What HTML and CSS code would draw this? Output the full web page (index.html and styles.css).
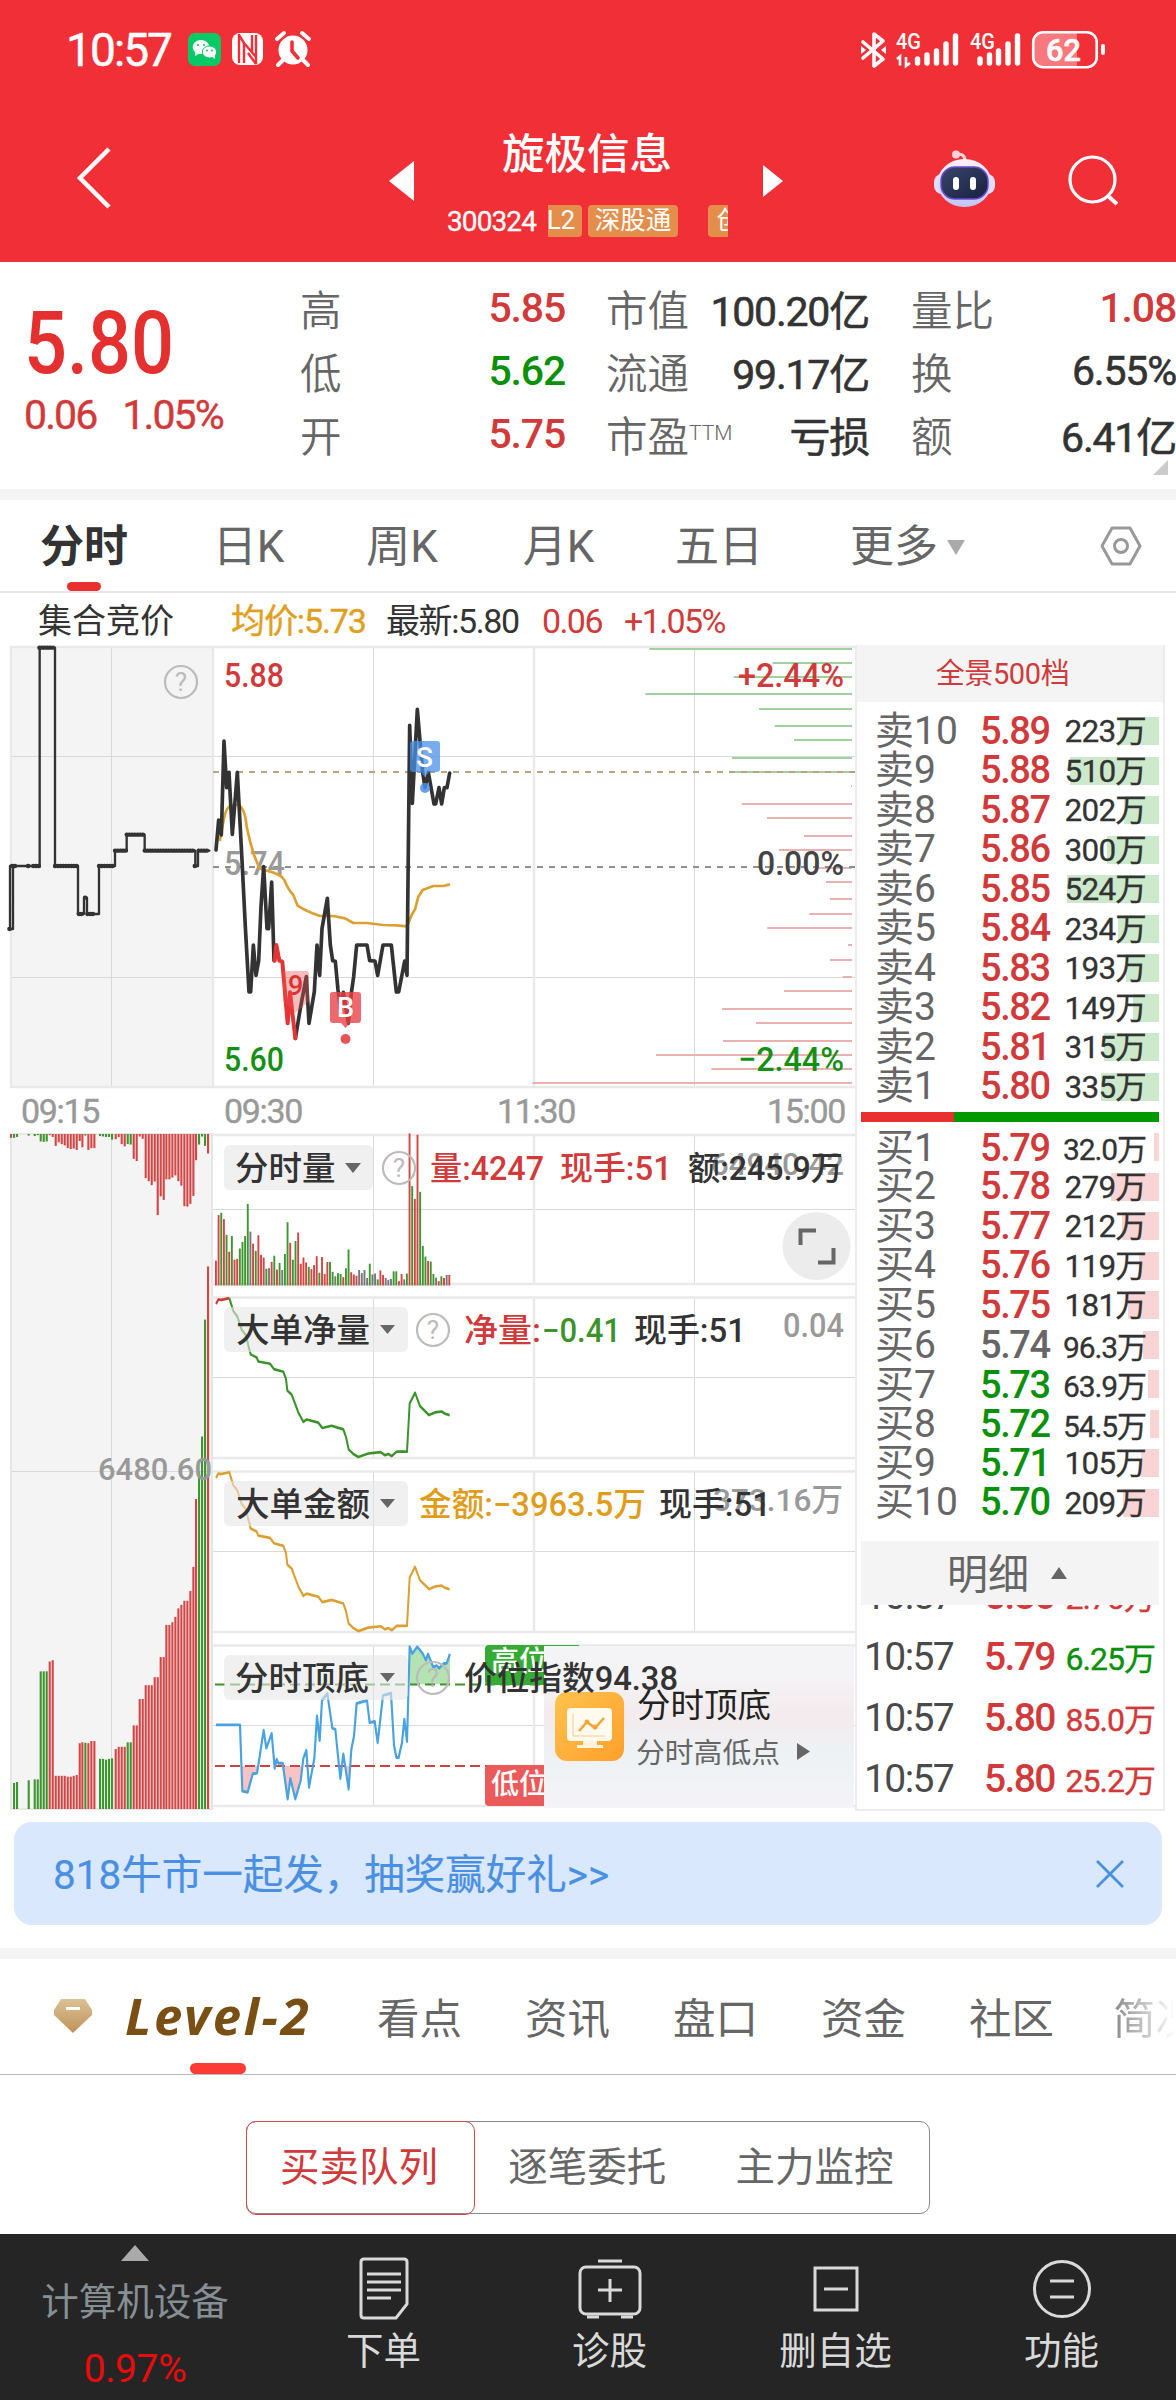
FILE: index.html
```html
<!DOCTYPE html>
<html lang="zh-CN">
<head>
<meta charset="utf-8">
<title>旋极信息 300324</title>
<link rel="stylesheet" href="styles.css">
</head>
<body>
<header class="header">
  <div class="status">
    <span class="clock">10:57</span>
    <svg class="st-left" width="128" height="36" viewBox="0 0 128 36">
      <rect x="0" y="1" width="33" height="33" rx="7" fill="#07c966"/>
      <ellipse cx="13" cy="15" rx="8.3" ry="7" fill="#fff"/><path d="M7 19l0 5 5-3z" fill="#fff"/>
      <ellipse cx="21.5" cy="20" rx="7.2" ry="6" fill="#fff" stroke="#07c966"/><path d="M23 24l4 3 0-5z" fill="#fff"/>
      <g fill="#07c966"><circle cx="10" cy="13" r="1.1"/><circle cx="16" cy="13" r="1.1"/><circle cx="19" cy="18.5" r="1"/><circle cx="24" cy="18.5" r="1"/></g>
      <rect x="44" y="1" width="31" height="32" rx="8" fill="#fff"/>
      <path d="M51 2v29M56 31V11l12 14M68 32V3M64 20V3M56 11L51 3M68 32l-8-11" fill="none" stroke="#f02f37" stroke-width="2.4"/>
      <circle cx="105" cy="18" r="14.5" fill="#fff"/>
      <path d="M89 7l7-6M114 1l7 6M95 28l-5 5M115 28l5 5" stroke="#fff" stroke-width="4" stroke-linecap="round"/>
      <path d="M104 10v9l6 7" fill="none" stroke="#f02f37" stroke-width="3.6" stroke-linecap="round"/>
    </svg>
    <svg class="st-right" width="250" height="38" viewBox="860 31 250 38">
      <path d="M863 42l20 17-9 7V34l9 7-20 17" fill="none" stroke="#fff" stroke-width="3.6" stroke-linejoin="round" stroke-linecap="round"/>
      <path d="M861 46l5 4-5 4zM886 46l-5 4 5 4z" fill="#fff"/>
      <g fill="#fff" font-family="Roboto" font-weight="500" font-size="22.500">
        <text x="896" y="49" textLength="25" lengthAdjust="spacingAndGlyphs">4G</text>
        <text x="970" y="49" textLength="25" lengthAdjust="spacingAndGlyphs">4G</text>
      </g>
      <path d="M897 59l3-2.500v9M906 57v9l4-3" fill="none" stroke="#fff" stroke-width="2.600"/>
      <g stroke="#fff" stroke-width="5.400" stroke-linecap="round">
        <path d="M917.500 59v4M927 55v8M936.500 51v12M946 44v19M955.500 36v27"/>
        <path d="M980 59v4M989.500 55v8M998.500 51v12M1008 44v19M1017.500 36v27"/>
      </g>
      <path d="M1042 33h35v34h-35a9 9 0 0 1-9-9V42a9 9 0 0 1 9-9z" fill="#f7797d"/>
      <rect x="1033.200" y="32.200" width="63.500" height="35" rx="10" fill="none" stroke="#fff" stroke-width="2.600"/>
      <rect x="1101" y="44" width="4" height="11" rx="2" fill="#fff"/>
      <text x="1046" y="61" font-family="Roboto" font-weight="500" font-size="32" fill="#fff" stroke="#fff" stroke-width=".6" textLength="35" lengthAdjust="spacingAndGlyphs">62</text>
    </svg>
  </div>
  <div class="titlebar">
    <svg class="back" width="40" height="66" viewBox="0 0 40 66"><path d="M35 4L6 33l29 29" fill="none" stroke="#fff" stroke-width="4.500"/></svg>
    <div class="title-nav">
      <svg width="25" height="40"><path d="M25 0v40L0 20z" fill="#fff"/></svg>
      <div class="title-mid">
        <h1>旋极信息</h1>
        <div class="codes">
          <span class="code">300324</span>
          <div class="badges"><span class="badge l2">L2</span><span class="badge sg">深股通</span><span class="badge cy">创业板</span></div>
        </div>
      </div>
      <svg class="tri-next" width="20" height="32"><path d="M0 0v32l20-16z" fill="#fff"/></svg>
    </div>
    <svg class="robot" width="62" height="58" viewBox="0 0 62 58">
      <defs>
        <linearGradient id="shell" x1="0" y1="0" x2="0" y2="1"><stop offset="0" stop-color="#fff0f6"/><stop offset="1" stop-color="#bfc6f6"/></linearGradient>
        <linearGradient id="face" x1="0" y1="0" x2="1" y2="1"><stop offset="0" stop-color="#38456b"/><stop offset="1" stop-color="#18203f"/></linearGradient>
      </defs>
      <path d="M22 4q9-1 9 7" fill="none" stroke="#ffd9e0" stroke-width="3"/><circle cx="22" cy="4.500" r="4" fill="#ffd3da"/>
      <rect x="0" y="24" width="61" height="20" rx="8" fill="#dfe0fb"/>
      <ellipse cx="30.500" cy="33" rx="27" ry="24" fill="url(#shell)"/>
      <rect x="7" y="17" width="47" height="32" rx="14" fill="url(#face)" stroke="#6a4cd0" stroke-width="1.500"/>
      <rect x="19" y="27" width="6" height="13" rx="3" fill="#fff"/><rect x="36" y="27" width="6" height="13" rx="3" fill="#fff"/>
    </svg>
    <svg class="search" width="54" height="54" viewBox="0 0 54 54"><circle cx="25.500" cy="25.500" r="22.500" fill="none" stroke="#fff" stroke-width="3.200"/><path d="M41 42l9 8" stroke="#fff" stroke-width="4"/></svg>
  </div>
</header>

<section class="quote">
  <div class="price-block">
    <div class="last">5.80</div>
    <div class="chg"><span>0.06</span><span>1.05%</span></div>
  </div>
  <dl class="col c1"><dt>高</dt><dd class="up">5.85</dd><dt>低</dt><dd class="down">5.62</dd><dt>开</dt><dd class="up">5.75</dd></dl>
  <dl class="col c2"><dt>市值</dt><dd>100.20亿</dd><dt>流通</dt><dd>99.17亿</dd><dt>市盈<sup>TTM</sup></dt><dd>亏损</dd></dl>
  <dl class="col c3"><dt>量比</dt><dd class="up">1.08</dd><dt>换</dt><dd>6.55%</dd><dt>额</dt><dd>6.41亿</dd></dl>
  <i class="corner"></i>
</section>
<div class="gapbar"></div>

<nav class="ktabs">
  <b class="on">分时</b><span>日K</span><span>周K</span><span>月K</span><span>五日</span><span class="more">更多<i></i></span>
  <svg width="42" height="40" viewBox="0 0 42 40"><path d="M12 2h18l10 18-10 18H12L2 20z" fill="none" stroke="#999" stroke-width="3" stroke-linejoin="round"/><circle cx="21" cy="20" r="6.500" fill="none" stroke="#999" stroke-width="3"/></svg>
</nav>
<div class="info"><span class="i1">集合竞价</span><span class="i2">均价:5.73</span><span class="i3">最新:5.80</span><span class="i4">0.06</span><span class="i5">+1.05%</span></div>

<main class="market">
  <div class="charts">
    <svg class="plot" width="855" height="444" viewBox="0 645 855 444">
      <rect x="10" y="646" width="203" height="441" fill="#f4f4f4"/>
      <path d="M111.500 646v441M373.500 646v441M694.500 646v441M10 756.500h845M10 977.500h845" stroke="#d9d9d9"/>
      <path d="M10 647h845M10 1087h845M11 646v442M213 646v442M534 646v442" stroke="#e9e9e9" stroke-width="2.500"/>
      <g id="depth"></g>
      <path d="M213 772h642" stroke="#b7a482" stroke-width="2" stroke-dasharray="6 6"/>
      <path d="M213 867h642" stroke="#8f8f8f" stroke-width="2" stroke-dasharray="6 6"/>
      <g class="lbl" font-size="34">
        <text x="224" y="687" fill="#d03a3a" textLength="60" lengthAdjust="spacingAndGlyphs">5.88</text>
        <text x="224" y="875" fill="#999" textLength="61" lengthAdjust="spacingAndGlyphs">5.74</text>
        <text x="224" y="1071" fill="#159015" textLength="60" lengthAdjust="spacingAndGlyphs">5.60</text>
        <text x="738" y="687" fill="#d03a3a" textLength="106" lengthAdjust="spacingAndGlyphs">+2.44%</text>
        <text x="757" y="875" fill="#444" textLength="87" lengthAdjust="spacingAndGlyphs">0.00%</text>
        <text x="738" y="1071" fill="#159015" textLength="106" lengthAdjust="spacingAndGlyphs">−2.44%</text>
      </g>
      <g transform="translate(0 640) scale(.33333)" fill="none" stroke-linejoin="round" stroke-linecap="round">
        <path stroke="#333" stroke-width="7" d="M30 867V678M30 867h9V678H119V23H165V678H234V822H252V773H261V822H297V678H345V632H380V584H434V632H586V678H594V632H628"/>
        <path stroke="#333" stroke-width="13" stroke-dasharray="1 7" d="M28 867h4M36 678h14M84 678h2M100 678h18M118 23h44M165 678h70M236 822h12M255 773h3M262 822h18M297 678h44M345 632h34M380 584h52M434 632h148M584 678h4M596 632h32"/>
        <path stroke="#dba033" stroke-width="8" d="M660 600L672 535Q680 497 697 495L715 495Q735 505 740 560Q748 600 762 645L778 685L800 692Q845 703 853 720Q865 750 880 765L893 797Q920 815 960 828L1000 828L1035 835L1060 849L1100 849L1150 855L1190 856L1221 859L1235 825L1245 808L1255 770L1268 750L1300 738L1330 738L1347 734"/>
        <path stroke="#333" stroke-width="11" d="M648 630L656 540 664 585 672 303 680 443 687 397 697 583 712 397 727 680 736 860 747 1056H752L760 915 768 1006 776 963 783 800 791 680 801 866H806L815 726 822 962M886 1195L902 1100 919 1010 927 1150 943 1055 951 915 959 1006 966 866 982 775 991 915 998 962 1006 964 1014 1050 1022 1110 1030 1057 1045 1150 1054 1060 1061 1010 1070 915H1101L1109 962 1125 963 1133 1006 1149 915H1174L1189 1056H1196L1214 963 1221 1006 1229 256 1237 490 1252 208 1260 303 1268 397 1275 443 1285 397 1302 492H1307L1317 443 1325 492 1333 443H1341L1349 399"/>
        <path stroke="#e53434" stroke-width="12" d="M824 962L829 915 838 962 847 965 863 1150 870 1057 886 1195"/>
      </g>
      <path d="M283 971h23q3 0 3 3v27l-13.500 12-12.500-12z" fill="#ea5050" fill-opacity=".38"/>
      <text class="lbl" x="288" y="995" font-size="27" fill="#d93333">9</text>
      <path d="M333 992h25q3 0 3 3v25q0 3-3 3h-8l-4.500 5-4.500-5h-8q-3 0-3-3v-25q0-3 3-3z" fill="#e83f44" fill-opacity=".78"/>
      <circle cx="345.500" cy="1039" r="5" fill="#e65458"/>
      <text class="lbl" x="337" y="1017" font-size="27" fill="#fff">B</text>
      <path d="M413 741h24q3 0 3 3v25q0 3-3 3h-8l-4 5-4-5h-8q-3 0-3-3v-25q0-3 3-3z" fill="#4a90ea" fill-opacity=".75"/>
      <circle cx="425" cy="788" r="5" fill="#4a90ea" fill-opacity=".85"/>
      <text class="lbl" x="416" y="767" font-size="28" fill="#fff">S</text>
      <g class="ask"><circle cx="181" cy="682" r="16"/><text x="181" y="691">?</text></g>
    </svg>
    <div class="axis"><span>09:15</span><span>09:30</span><span>11:30</span><span>15:00</span></div>
    <div class="lower">
      <svg class="plot" width="213" height="678" viewBox="0 1133 213 678">
        <rect x="10" y="1134" width="203" height="675" fill="#f4f4f4"/>
        <path d="M111.500 1134v675M10 1471.500h203" stroke="#d9d9d9"/>
        <path d="M11 1134v675M10 1134h203M10 1809h203M212 1134v675" stroke="#e6e6e6" stroke-width="2"/>
        <g id="auction"></g>
        <text class="lbl" x="98" y="1480" font-size="32" fill="#999" textLength="114" lengthAdjust="spacingAndGlyphs">6480.60</text>
      </svg>
      <div class="stack">
        <svg class="plot" width="642" height="153" viewBox="213 1133 642 153">
          <path d="M373.500 1134v151M694.500 1134v151M213 1209.500h642" stroke="#d9d9d9"/>
          <path d="M213 1135h642M213 1284h642M534 1134v151" stroke="#e9e9e9" stroke-width="2.500"/>
          <g id="volume"></g>
          <rect class="pill" x="224" y="1145" width="149" height="45" rx="6"/>
          <text class="lbl" x="235" y="1180" font-size="33.500" fill="#333">分时量</text>
          <path d="M345 1163h16l-8 10z" fill="#666"/>
          <g class="ask"><circle cx="399" cy="1168" r="16"/><text x="399" y="1177">?</text></g>
          <text class="lbl" x="711" y="1175" font-size="32" fill="#999" textLength="133" lengthAdjust="spacingAndGlyphs">64940.42</text>
          <g class="lbl" font-size="32.500">
            <text x="430" y="1180" fill="#d03a3a" textLength="114" lengthAdjust="spacingAndGlyphs">量:4247</text>
            <text x="560" y="1180" fill="#d03a3a" textLength="112" lengthAdjust="spacingAndGlyphs">现手:51</text>
            <text x="688" y="1180" fill="#333" textLength="155" lengthAdjust="spacingAndGlyphs">额:245.9万</text>
          </g>
          <circle cx="816.500" cy="1246" r="34" fill="#ececec"/>
          <path d="M800.500 1245v-14.500H816M818 1262.500h15.500V1248" fill="none" stroke="#666" stroke-width="4"/>
        </svg>
        <svg class="plot" width="642" height="163" viewBox="213 1296 642 163">
          <path d="M373.500 1297v161M694.500 1297v161M213 1377.500h642" stroke="#d9d9d9"/>
          <path d="M213 1297.500h642M213 1458h642M534 1297v161" stroke="#e9e9e9" stroke-width="2.500"/>
          <g transform="translate(0 1120) scale(.33333 .44643)" fill="none" stroke-width="6" stroke-linejoin="round">
            <path stroke="#d03a3a" d="M648 412L655 402 665 403 688 399"/>
            <path stroke="#3c932c" d="M688 399L700 428 712 440 725 470 738 482 745 505 752 525 770 532 775 541 810 546 822 558 850 564 858 580 862 606 875 615 895 655 910 676 920 671 955 678 967 690 995 685 1030 693 1038 710 1046 738 1060 748 1075 755 1105 747 1142 744 1155 751 1165 748 1175 753 1190 743 1221 743 1229 635 1245 611 1260 641 1275 652 1287 661 1305 655 1325 653 1335 658 1349 661"/>
          </g>
          <rect class="pill" x="224" y="1307" width="184" height="45" rx="6"/>
          <text class="lbl" x="236" y="1342" font-size="33.500" fill="#333">大单净量</text>
          <path d="M380 1325h15l-7.500 9z" fill="#666"/>
          <g class="ask"><circle cx="433" cy="1330" r="16"/><text x="433" y="1339">?</text></g>
          <g class="lbl" font-size="32.500">
            <text x="464" y="1342" fill="#d03a3a" textLength="77" lengthAdjust="spacingAndGlyphs">净量:</text>
            <text x="542" y="1342" fill="#3c932c" textLength="79" lengthAdjust="spacingAndGlyphs">−0.41</text>
            <text x="634" y="1342" fill="#333" textLength="112" lengthAdjust="spacingAndGlyphs">现手:51</text>
            <text x="783" y="1337" fill="#999" textLength="61" lengthAdjust="spacingAndGlyphs">0.04</text>
          </g>
        </svg>
        <svg class="plot" width="642" height="163" viewBox="213 1470 642 163">
          <path d="M373.500 1471v161M694.500 1471v161M213 1551.500h642" stroke="#d9d9d9"/>
          <path d="M213 1471.500h642M213 1632h642M534 1471v161" stroke="#e9e9e9" stroke-width="2.500"/>
          <path transform="translate(0 1294.100) scale(.33333 .44643)" fill="none" stroke="#dba033" stroke-width="6" stroke-linejoin="round" d="M648 412L655 402 665 403 688 399 700 428 712 440 725 470 738 482 745 505 752 525 770 532 775 541 810 546 822 558 850 564 858 580 862 606 875 615 895 655 910 676 920 671 955 678 967 690 995 685 1030 693 1038 710 1046 738 1060 748 1075 755 1105 747 1142 744 1155 751 1165 748 1175 753 1190 743 1221 743 1229 635 1245 611 1260 641 1275 652 1287 661 1305 655 1325 653 1335 658 1349 661"/>
          <rect class="pill" x="224" y="1481" width="184" height="45" rx="6"/>
          <text class="lbl" x="236" y="1516" font-size="33.500" fill="#333">大单金额</text>
          <path d="M380 1499h15l-7.500 9z" fill="#666"/>
          <text class="lbl" x="713" y="1511" font-size="32" fill="#999" textLength="130" lengthAdjust="spacingAndGlyphs">373.16万</text>
          <g class="lbl" font-size="32.500">
            <text x="419" y="1516" fill="#e09d1b" textLength="227" lengthAdjust="spacingAndGlyphs">金额:−3963.5万</text>
            <text x="659" y="1516" fill="#333" textLength="112" lengthAdjust="spacingAndGlyphs">现手:51</text>
          </g>
        </svg>
        <svg class="plot" width="642" height="165" viewBox="213 1644 642 165">
          <defs>
            <linearGradient id="card" x1="0" y1="0" x2="0" y2="1"><stop offset="0" stop-color="#f4f4f6"/><stop offset=".2" stop-color="#f4f3f5"/><stop offset=".42" stop-color="#f3ebed"/><stop offset=".68" stop-color="#edf2f4"/><stop offset="1" stop-color="#f4f3f7"/></linearGradient>
            <linearGradient id="ico" x1="0" y1="0" x2="1" y2="1"><stop offset="0" stop-color="#ffc34d"/><stop offset="1" stop-color="#ff9f2c"/></linearGradient>
          </defs>
          <path d="M373.500 1645v161M213 1725.500h642" stroke="#d9d9d9"/>
          <path d="M213 1645.500h642M213 1806h642M534 1645v161" stroke="#e9e9e9" stroke-width="2.500"/>
          <g transform="translate(0 1120) scale(.33333 .44643)">
            <path fill="#f7c3c5" d="M725 1447L727 1503 743 1506 758 1465 771 1463 775 1447zM849 1447L863 1521 871 1475 886 1521 902 1480 905 1447zM1016 1447L1021 1475 1027 1447zM1034 1447L1046 1499 1052 1447z"/>
            <path fill="#b4e2b3" d="M1229 1264V1180L1237 1195 1252 1180 1268 1195 1278 1210 1284 1196 1300 1226 1318 1228 1330 1218 1340 1217 1350 1196V1264z"/>
          </g>
          <path d="M215 1684.500h340" stroke="#3c932c" stroke-width="2" stroke-dasharray="10 5"/>
          <path d="M215 1766h340" stroke="#d04040" stroke-width="2" stroke-dasharray="10 5"/>
          <path transform="translate(0 1120) scale(.33333 .44643)" fill="none" stroke="#4aa3df" stroke-width="6.500" stroke-linejoin="round" d="M648 1355H720L727 1503 743 1506 758 1465 771 1463 776 1440 791 1367 799 1407 815 1374 824 1452 830 1432 835 1441 848 1441 863 1521 871 1475 886 1521 902 1480 910 1430 919 1412 927 1495 943 1430 951 1335 959 1390 966 1300 982 1285 997 1362 1006 1365 1014 1425 1021 1475 1030 1420 1046 1499 1054 1410 1062 1380 1070 1307 1101 1300 1109 1350 1124 1347 1133 1395 1149 1289 1173 1284 1182 1400 1189 1428 1196 1428 1206 1395 1213 1342 1221 1392 1229 1180 1237 1195 1252 1180 1268 1195 1278 1210 1284 1196 1300 1226 1310 1222 1318 1228 1330 1218 1340 1217 1350 1196"/>
          <rect class="pill" x="224" y="1655" width="184" height="45" rx="6"/>
          <text class="lbl" x="235" y="1690" font-size="33.500" fill="#333">分时顶底</text>
          <path d="M380 1673h15l-7.500 9z" fill="#666"/>
          <g class="ask"><circle cx="433" cy="1678" r="16"/><text x="433" y="1687">?</text></g>
          <rect x="485" y="1645" width="96" height="40" rx="4" fill="#35ab35"/>
          <rect x="485" y="1765" width="96" height="41" rx="4" fill="#eb5a5a"/>
          <text class="lbl" x="491" y="1671" font-size="28" fill="#fff">高位</text>
          <text class="lbl" x="491" y="1794" font-size="28" fill="#fff">低位</text>
          <rect x="544" y="1646" width="310" height="162" fill="url(#card)"/>
          <rect x="555" y="1692" width="69" height="69" rx="12" fill="url(#ico)"/>
          <rect x="567" y="1708" width="45" height="33" rx="4" fill="#fff9ee"/><path d="M583 1741h14v4h6v3h-26v-3h6z" fill="#fff3dc"/>
          <path d="M573 1714v22h32" fill="none" stroke="#f8ddb0" stroke-width="1.500"/>
          <path d="M579 1731l8-9 8 6 9-10" fill="none" stroke="#f3a53a" stroke-width="2.600"/><circle cx="587" cy="1722" r="2.500" fill="#f3a53a"/><circle cx="595" cy="1727" r="2.500" fill="#f3a53a"/>
          <text class="lbl" x="464" y="1690" font-size="33" fill="#333" textLength="214" lengthAdjust="spacingAndGlyphs">价位指数94.38</text>
          <text class="lbl reg" x="637" y="1717" font-size="33.500" fill="#222">分时顶底</text>
          <text class="lbl reg" x="636" y="1763" font-size="28.800" fill="#666">分时高低点</text>
          <path d="M797 1743v17l13-8.500z" fill="#666"/>
        </svg>
      </div>
    </div>
  </div>
  <aside class="book">
    <div class="book-head">全景500档</div>
    <div class="side" id="sell"></div>
    <div class="ratio"><i></i></div>
    <div class="side" id="buy"></div>
    <div class="detail"><span>明细</span><i></i></div>
    <div class="trades" id="trades"></div>
  </aside>
</main>

<div class="banner"><span>818牛市一起发，抽奖赢好礼&gt;&gt;</span><svg width="30" height="30" viewBox="0 0 30 30"><path d="M2 2l26 26M28 2L2 28" stroke="#4a90e2" stroke-width="2.800"/></svg></div>
<div class="gapbar"></div>
<nav class="ltabs">
  <svg width="40" height="36" viewBox="0 0 40 36"><defs><linearGradient id="gem" x1="0" y1="0" x2="0" y2="1"><stop offset="0" stop-color="#dcc196"/><stop offset="1" stop-color="#bf915a"/></linearGradient></defs><path d="M8 0h24l7 11v5L20 34 1 16v-5z" fill="url(#gem)"/><path d="M13 9.500h14" stroke="#fff" stroke-width="3"/></svg>
  <b>Level-2</b><span>看点</span><span>资讯</span><span>盘口</span><span>资金</span><span>社区</span><span class="fade">简况</span>
</nav>
<section class="seg-wrap"><div class="seg"><span class="on">买卖队列</span><span>逐笔委托</span><span>主力监控</span></div></section>

<footer class="bottom">
  <div class="idx"><i></i><span>计算机设备</span><em>0.97%</em></div>
  <div class="act"><svg width="64" height="64" viewBox="0 0 64 64"><path d="M12 3h40q3 0 3 3v42L44 62H12q-3 0-3-3V6q0-3 3-3z"/><path d="M15 18h34M15 26h34M15 34h34M15 42h24"/></svg><span>下单</span></div>
  <div class="act"><svg width="68" height="64" viewBox="0 0 68 64"><rect x="4" y="11" width="60" height="47" rx="6"/><path d="M22 5h24M34 23v23M22 34h24M11 61h12M45 61h12"/></svg><span>诊股</span></div>
  <div class="act"><svg width="64" height="64" viewBox="0 0 64 64"><path d="M11 12h42v42H11zM20 33h24"/></svg><span>删自选</span></div>
  <div class="act"><svg width="64" height="64" viewBox="0 0 64 64"><circle cx="32" cy="33" r="27.500"/><path d="M20 25h24M20 41h24"/></svg><span>功能</span></div>
</footer>
<script src="script.js"></script>
</body>
</html>
```
FILE: styles.css
```css
* { box-sizing: border-box; margin: 0; padding: 0; }
body { width: 1176px; height: 2400px; overflow: hidden; background: #fff; color: #333; font-family: Roboto, "Noto Sans CJK SC", sans-serif; }
svg { display: block; flex: none; overflow: visible; }
i, em { font-style: normal; }
.up { color: #d03a3a; }
.down { color: #0a900a; }
.flat { color: #666; }

.header { height: 262px; background: #f02f37; color: #fff; }
.status { height: 100px; display: flex; align-items: center; padding: 0 66px 0 66px; }
.clock { width: 122px; font-size: 46px; font-weight: 400; letter-spacing: -1.9px; line-height: 100px; -webkit-text-stroke: .5px #fff; }
.st-right { margin-left: auto; }
.titlebar { height: 162px; display: flex; padding-left: 74px; }
.back { margin-top: 45px; }
.title-nav { margin-left: 275px; width: 394px; display: flex; }
.title-nav > svg { margin-top: 61px; }
.title-nav > .tri-next { margin-top: 65px; }
.title-mid { width: 349px; padding: 29px 0 0 34px; }
.title-mid h1 { width: 278px; text-align: center; font-size: 42.500px; font-weight: 500; line-height: 52px; }
.codes { display: flex; align-items: center; margin-top: 24px; height: 32px; }
.code { width: 101px; margin-left: -1px; font-size: 28px; letter-spacing: -.9px; -webkit-text-stroke: .3px; }
.badges { width: 180px; height: 32px; overflow: hidden; display: flex; }
.badge { flex: none; height: 32px; line-height: 31px; border-radius: 4px; background: #e58e4c; font-size: 25.500px; text-align: center; }
.l2 { width: 42px; margin-left: -8px; }
.sg { width: 90px; margin-left: 6px; }
.cy { width: 94px; margin-left: 30px; }
.robot { margin: 50px 0 0 151px; }
.search { margin: 54px 0 0 71px; }

.quote { height: 227px; display: flex; position: relative; padding-top: 14px; }
.price-block { width: 300px; padding-left: 24px; color: #e53030; }
.last { margin-top: 25px; font-size: 87px; line-height: 84px; font-weight: 500; transform: scaleX(.87); transform-origin: 0 0; }
.chg { display: flex; gap: 26px; margin-top: 2px; font-size: 41px; line-height: 56px; letter-spacing: -1.900px; color: #d03a3a; -webkit-text-stroke: .4px; }
.col { display: grid; grid-template-columns: 60px 1fr; grid-auto-rows: 63px; align-items: center; font-size: 41px; white-space: nowrap; }
.col dt { color: #666; font-size: 41.500px; font-weight: 350; }
.col dd { text-align: right; letter-spacing: -1.200px; font-weight: 500; }
.col dd:not(.up):not(.down) { font-weight: 400; -webkit-text-stroke: .6px #333; }
.c1 { width: 265px; }
.c2 { width: 263px; margin-left: 41px; }
.c3 { width: 265px; margin-left: 42px; }
.col sup { font-size: 21px; font-weight: 300; vertical-align: 12px; line-height: 0; }
.corner { position: absolute; right: 8px; bottom: 14px; border-left: 15px solid transparent; border-bottom: 15px solid #ccc; }
.gapbar { height: 11px; background: #f4f4f4; }

.ktabs { height: 93px; display: grid; grid-template-columns: 168px 161px 146px 167px 154px 223px 123px; align-items: center; justify-items: center; border-bottom: 2px solid #e8e8e8; font-size: 44px; color: #666; }
.ktabs > * { line-height: 87px; padding-top: 4px; }
.ktabs svg { justify-self: end; padding: 0; }
.ktabs .on { color: #333; position: relative; }
.ktabs .on::after { content: ""; position: absolute; left: 27px; bottom: 0; width: 34px; height: 9px; border-radius: 5px; background: #e93030; }
.more { display: flex; align-items: center; gap: 9px; }
.more i { border: 9px solid transparent; border-top: 15px solid #aaa; border-bottom: 0; }
.info { height: 52px; display: flex; padding-left: 38px; font-size: 34px; line-height: 56px; white-space: nowrap; }
.info span { letter-spacing: -.8px; }
.info .i1 { width: 193px; letter-spacing: 0; }
.info .i2 { width: 155px; color: #dfa022; -webkit-text-stroke: .4px; letter-spacing: -1.100px; }
.info .i3 { width: 156px; letter-spacing: -1.400px; }
.info .i4 { width: 82px; color: #d03a3a; letter-spacing: -1.600px; }
.info .i5 { color: #d03a3a; letter-spacing: -1.600px; }

.market { height: 1177px; display: flex; }
.charts { width: 855px; }
.lbl { font-family: Roboto, "Noto Sans CJK SC", sans-serif; font-weight: 500; }
.reg { font-weight: 400; }
.pill { fill: #e6e6e6; fill-opacity: .6; }
.ask circle { fill: none; stroke: #bbb; stroke-width: 2.200px; }
.ask text { fill: #bbb; font-size: 26px; text-anchor: middle; }
.axis { height: 44px; display: grid; grid-template-columns: 203px 273px 270px 98px; padding-left: 21px; font-size: 34px; line-height: 44px; color: #999; -webkit-text-stroke: .4px; }
.axis span { letter-spacing: -1.300px; }
.lower { display: flex; }
.stack { display: flex; flex-direction: column; gap: 10px; }
.stack svg:nth-child(n+3) { margin-top: 1px; }

.book { width: 310px; height: 1166px; border: 2px solid #ececec; border-top: 0; }
.book-head { height: 57px; background: #f4f4f4; color: #d03a3a; text-align: center; font-size: 29px; line-height: 58px; padding-right: 15px; letter-spacing: -.4px; }
.side { padding: 0 4px 0 18px; }
#sell { padding-top: 9px; }
.lv { height: 39.500px; display: grid; grid-template-columns: 105px 78px 104px; position: relative; align-items: center; line-height: 39px; white-space: nowrap; }
.lv > * { position: relative; }
.lv .bar { position: absolute; right: 0; top: 6px; height: 28px; background: #cce9cc; }
#buy .bar { background: #f9d4d4; }
.lv .n { font-size: 39px; color: #666; }
.lv .p { font-size: 38px; font-weight: 500; letter-spacing: -1.400px; }
.lv .v { font-size: 31.500px; width: 88px; text-align: right; letter-spacing: -.8px; padding-top: 1px; -webkit-text-stroke: .3px; }
.lv .v.small { font-size: 30px; letter-spacing: -1.100px; padding-top: 3px; }
.ratio { margin: 6px 4px 5px; height: 10px; background: #090; }
.ratio i { display: block; height: 10px; width: 31.200%; background: #e93030; }
.detail { margin: 19px 4px 0; height: 64px; background: #f4f4f4; color: #666; font-size: 41px; line-height: 60px; display: flex; align-items: center; padding-left: 86px; gap: 22px; }
.detail span { padding-top: 4px; }
.detail i { border: 8px solid transparent; border-bottom: 12px solid #666; border-top: 0; }
.trades { height: 203px; overflow: hidden; display: flex; flex-direction: column; justify-content: flex-end; padding: 0 4px 0 7px; }
.tr { flex: none; height: 61px; display: grid; grid-template-columns: 120px 80px 91px; line-height: 61px; font-size: 39px; white-space: nowrap; align-items: baseline; }
.tr:last-child { margin-bottom: -2px; }
.tr .t { color: #4a4a4a; letter-spacing: -1.600px; }
.tr .p { color: #d03a3a; font-weight: 500; letter-spacing: -1.600px; }
.tr .v { font-size: 32px; text-align: right; letter-spacing: -1px; -webkit-text-stroke: .4px; }

.banner { margin: 0 14px; height: 103px; border-radius: 18px; background: #d9e8fc; color: #4a90e2; display: flex; align-items: center; justify-content: space-between; padding: 0 37px 0 39px; font-size: 40.500px; }
.banner span { padding-bottom: 4px; -webkit-text-stroke: .2px; }
.banner + .gapbar { margin-top: 23px; }

.ltabs { height: 116px; border-bottom: 1.500px solid #bbb; display: flex; align-items: center; padding-left: 53px; font-size: 42.500px; color: #666; position: relative; overflow: hidden; white-space: nowrap; }
.ltabs b { width: 252px; flex: none; margin: -3px 0 0 32px; font-family: "Noto Sans", Roboto, sans-serif; font-size: 51px; font-weight: 700; font-style: italic; letter-spacing: 2.600px; color: #7a4f14; }
.ltabs span { width: 148px; flex: none; padding-bottom: 3px; }
.ltabs::after { content: ""; position: absolute; left: 190px; bottom: 0; width: 56px; height: 11px; border-radius: 6px; background: #fa3c34; }
.ltabs .fade { background: linear-gradient(90deg, #888, #fff 62px); -webkit-background-clip: text; color: transparent; margin-left: -4px; }

.seg-wrap { height: 159px; padding-top: 46px; }
.seg { width: 684px; height: 93px; margin: 0 auto; display: flex; border: 1.500px solid #888; border-radius: 10px; font-size: 39.500px; line-height: 92px; color: #666; }
.seg span { flex: 1; text-align: center; padding-right: 2px; }
.seg .on { color: #d03a3a; border: 1.500px solid #d04a4a; border-radius: 10px; margin: -1.500px 0 -1.500px -1.500px; }

.bottom { height: 166px; background: #252525; display: flex; color: #d9d9d9; }
.idx { width: 270px; display: flex; flex-direction: column; align-items: center; padding-top: 11px; }
.idx i { border: 14.500px solid transparent; border-bottom: 16px solid #aaa; border-top: 0; }
.idx span { font-size: 37.500px; color: #858f94; line-height: 54px; margin-top: 14px; }
.idx em { font-size: 39px; line-height: 50px; color: #e80c0c; margin-top: 15px; letter-spacing: -.4px; }
.act { width: 226px; display: flex; flex-direction: column; align-items: center; padding: 22px 0 0 1px; }
.act svg { fill: none; stroke: #d9d9d9; stroke-width: 3px; }
.act span { font-size: 37.500px; line-height: 54px; margin-top: 4px; }
```
FILE: script.js
```js
const NS = 'http://www.w3.org/2000/svg';
const RED = '#d24646', GREEN = '#3f9530', GREY = '#777';
const COLORS = { r: RED, g: GREEN, k: GREY };

function rect(parent, x, y, w, h, fill) {
  const r = document.createElementNS(NS, 'rect');
  r.setAttribute('x', x); r.setAttribute('y', y);
  r.setAttribute('width', w); r.setAttribute('height', Math.max(h, 0));
  r.setAttribute('fill', fill);
  parent.appendChild(r);
}

// Pending orders per price level, drawn from the right edge of the price chart
const depth = document.getElementById('depth');
[[658,27],[1028,69],[911,111],[646,161],[987,207],[1034,258],[1092,300],[906,353],[898,396],
 [1263,437],[935,492],[1011,534],[1122,588],[1047,630],[1155,684],[1188,726],[1200,776],[1138,822],
 [1012,863],[1254,915],[1200,960],[1238,1011],[1062,1053],[876,1107],[978,1149],[879,1203],[678,1245],[844,1287],[307,1329]]
  .forEach(([x, y], i) => rect(depth, 430 + x / 3, Math.round(639 + y / 3), (1266 - x) / 3, 2, i < 9 ? '#a0d0a0' : '#ebb0b0'));

// Per-minute volume
const volume = document.getElementById('volume');
('315r 213r 208g 222r 257g 295r 260g 313r 311r 288g 273g 260g 188g 250k 277r 293g 258r 302r 308r 333g 332k 318r 304g 335r 320g 336k 300g 229g 275r 313g 271g 252r 322r 308r 319r 329g 334r 325r 305r 342g 307r 345r 318r 318g 340g 350k 343g 345g 352r 332g 290g 341r 346r 349r 336k 343k 336k 354k 322g 346k 344k 357g 337r 347r 354k 358k 356k 339g 339g 361r 345r 357k 344g 30r 148g 177r 33r 161g 282g 306g 316r 317g 345g 353k 361r 350g 354r 347k 347r')
  .split(' ').forEach((s, i) => {
    const top = 1120 + parseInt(s) / 2.24;
    rect(volume, 215 + i * 2.652, top, 1.9, 1285.5 - top, COLORS[s.slice(-1)]);
  });

// Call auction: matched volume at the bottom, unmatched at the top
const auction = document.getElementById('auction');
const slot = (s, draw) => s.split(' ').forEach(t => {
  const [x, v] = t.split(':');
  draw(x / 3 - 1, 1120 + parseInt(v) / 2.24, COLORS[v.slice(-1)]);
});
slot('42:1485g 51:1483g 86:1479g 104:1477g 113:1477g 122:1235g 131:1235g 140:1235g 149:1213r 158:1210r 167:1469r 176:1469r 185:1469r 194:1469r 203:1471r 212:1471r 221:1469r 230:1467r 239:1396r 247:1394r 256:1395g 265:1396r 274:1391r 283:1391r 300:1431g 309:1431g 318:1433g 327:1431g 336:1430g 347:1409r 356:1404r 365:1404r 374:1404r 383:1394g 392:1394g 401:1356r 410:1356r 419:1297r 428:1297r 437:1266r 446:1266r 455:1266r 464:1248r 473:1248r 482:1203r 491:1203r 499:1131r 508:1131r 517:1125r 526:1113r 535:1094r 544:1086r 553:1077r 562:1077r 571:1055r 580:1001r 588:849r 597:787g 606:709g 615:447g 624:328r',
  (x, y, c) => rect(auction, x, y, 2.1, 1809 - y, c));
slot('33:40r 42:40g 51:38g 86:35g 104:36g 113:34g 122:48g 131:49g 140:48g 149:34r 158:38r 167:58r 176:50r 185:54r 194:57r 203:63r 212:65r 221:64r 230:67r 239:47r 247:61r 256:35g 265:67r 274:63r 283:63r 300:36g 309:37g 318:38g 327:38g 336:44g 347:43r 356:38r 365:54r 374:59r 383:54g 392:55g 401:87r 410:92r 419:37r 428:42r 437:130r 446:137r 455:146r 464:138r 473:213r 482:171r 491:179r 499:133r 508:133r 517:129r 526:124r 535:137r 544:147r 553:193r 562:194r 571:188r 580:170r 588:90r 597:55g 606:37g 615:58g 624:75r',
  (x, y, c) => rect(auction, x, 1134, 2.1, y - 1134, c));

// Order book
function level(name, price, vol, w, cls) {
  return `<div class="lv"><i class="bar" style="width:${w}px"></i><span class="n">${name}</span><span class="p ${cls}">${price}</span><span class="v${vol.includes('.') ? ' small' : ''}">${vol}万</span></div>`;
}
document.getElementById('sell').innerHTML =
  [['223', 39], ['510', 89], ['202', 35], ['300', 52], ['524', 92], ['234', 41], ['193', 33], ['149', 26], ['315', 55], ['335', 58]]
    .map(([v, w], i) => level('卖' + (10 - i), (5.89 - i / 100).toFixed(2), v, w, 'up')).join('');
document.getElementById('buy').innerHTML =
  [['32.0', 5], ['279', 48], ['212', 37], ['119', 20], ['181', 31], ['96.3', 16], ['63.9', 11], ['54.5', 9], ['105', 18], ['209', 36]]
    .map(([v, w], i) => level('买' + (i + 1), (5.79 - i / 100).toFixed(2), v, w, i < 5 ? 'up' : i === 5 ? 'flat' : 'down')).join('');
document.getElementById('trades').innerHTML =
  [['5.80', '2.70', 'up'], ['5.79', '6.25', 'down'], ['5.80', '85.0', 'up'], ['5.80', '25.2', 'up']]
    .map(([p, v, c]) => `<div class="tr"><span class="t">10:57</span><span class="p">${p}</span><span class="v ${c}">${v}万</span></div>`).join('');
```
